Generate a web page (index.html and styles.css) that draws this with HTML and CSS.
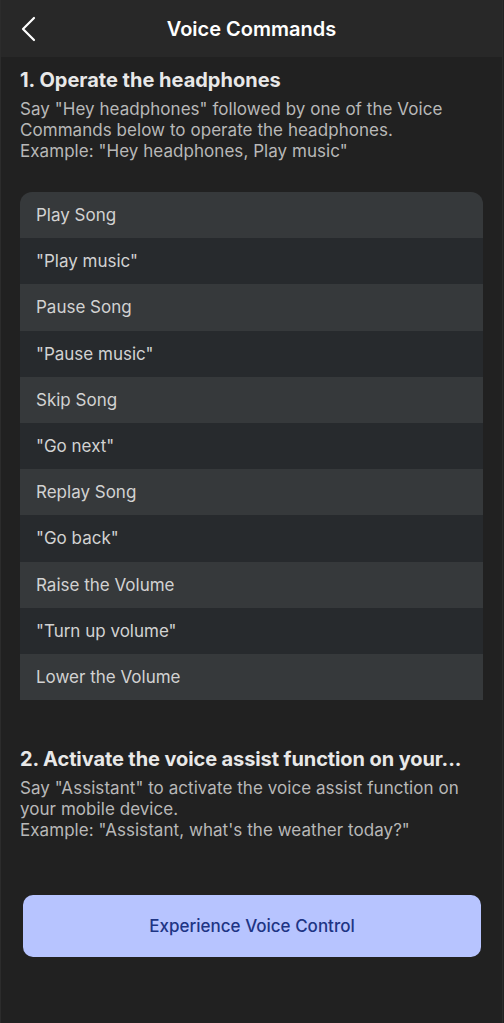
FILE: index.html
```html
<!DOCTYPE html>
<html>

<head>
    <title>Voice Commands</title>
    <link rel="stylesheet" href="styles.css">
</head>

<body>
    <div class="screen">
        <div class="topbar">
            <button class="back" aria-label="Back">
                <svg width="16" height="26" viewBox="0 0 16 26">
                    <path d="M13 2 L2 13 L13 24" fill="none" stroke="#fff" stroke-width="2.2"
                        stroke-linecap="round" stroke-linejoin="round" />
                </svg>
            </button>
            <h1>Voice Commands</h1>
        </div>

        <div class="content">
            <h2>1. Operate the headphones</h2>
            <p class="desc">Say "Hey headphones" followed by one of the Voice Commands below to operate the
                headphones.<br>Example: "Hey headphones, Play music"</p>

            <ul class="commands">
                <li class="cmd">Play Song</li>
                <li class="phrase">"Play music"</li>
                <li class="cmd">Pause Song</li>
                <li class="phrase">"Pause music"</li>
                <li class="cmd">Skip Song</li>
                <li class="phrase">"Go next"</li>
                <li class="cmd">Replay Song</li>
                <li class="phrase">"Go back"</li>
                <li class="cmd">Raise the Volume</li>
                <li class="phrase">"Turn up volume"</li>
                <li class="cmd">Lower the Volume</li>
            </ul>

            <h2 class="second">2. Activate the voice assist function on your...</h2>
            <p class="desc">Say "Assistant" to activate the voice assist function on your mobile
                device.<br>Example: "Assistant, what's the weather today?"</p>

            <button class="try-btn">Experience Voice Control</button>
        </div>
    </div>
</body>

</html>
```

FILE: styles.css
```css
html,
body {
    margin: 0;
    padding: 0;
    background-color: #212121;
}

body {
    font-family: Inter, "Noto Sans", sans-serif;
    color: #e6e6e6;
}

.screen {
    min-height: 1023px;
    border-left: 1px solid #2c2c2c;
    border-right: 1px solid #2c2c2c;
    margin-right: 1px;
}

.topbar {
    position: relative;
    height: 57px;
    background-color: #282828;
    display: flex;
    align-items: center;
    justify-content: center;
}

.topbar h1 {
    margin: 0;
    font-size: 20px;
    font-weight: 600;
    color: #fff;
}

.back {
    position: absolute;
    left: 20px;
    top: 16px;
    padding: 0;
    border: none;
    background: none;
}

.content {
    padding: 0 19px 0 19px;
}

h2 {
    margin: 11px 0 0;
    font-size: 20px;
    line-height: 24px;
    font-weight: 700;
    color: #e8e8e8;
}

h2.second {
    margin-top: 47px;
    white-space: nowrap;
    letter-spacing: -0.1px;
}

.desc {
    margin: 7px 0 0;
    font-size: 17px;
    line-height: 21px;
    letter-spacing: 0.05px;
    color: #b8b8b8;
}

.commands {
    list-style: none;
    margin: 30px 0 0;
    padding: 0;
    border-radius: 12px 12px 0 0;
    overflow: hidden;
}

.commands li {
    height: 46.2px;
    padding-left: 16px;
    display: flex;
    align-items: center;
    font-size: 17px;
    color: #d2d2d2;
}

.commands .cmd {
    background-color: #36393b;
}

.commands .phrase {
    background-color: #272a2d;
}

.try-btn {
    display: block;
    width: 458px;
    height: 62px;
    margin: 54px 0 0 3px;
    border: none;
    border-radius: 10px;
    background-color: #b7c4ff;
    color: #1e3585;
    font-family: Inter, "Noto Sans", sans-serif;
    font-size: 17px;
    font-weight: 500;
    cursor: pointer;
}
```
